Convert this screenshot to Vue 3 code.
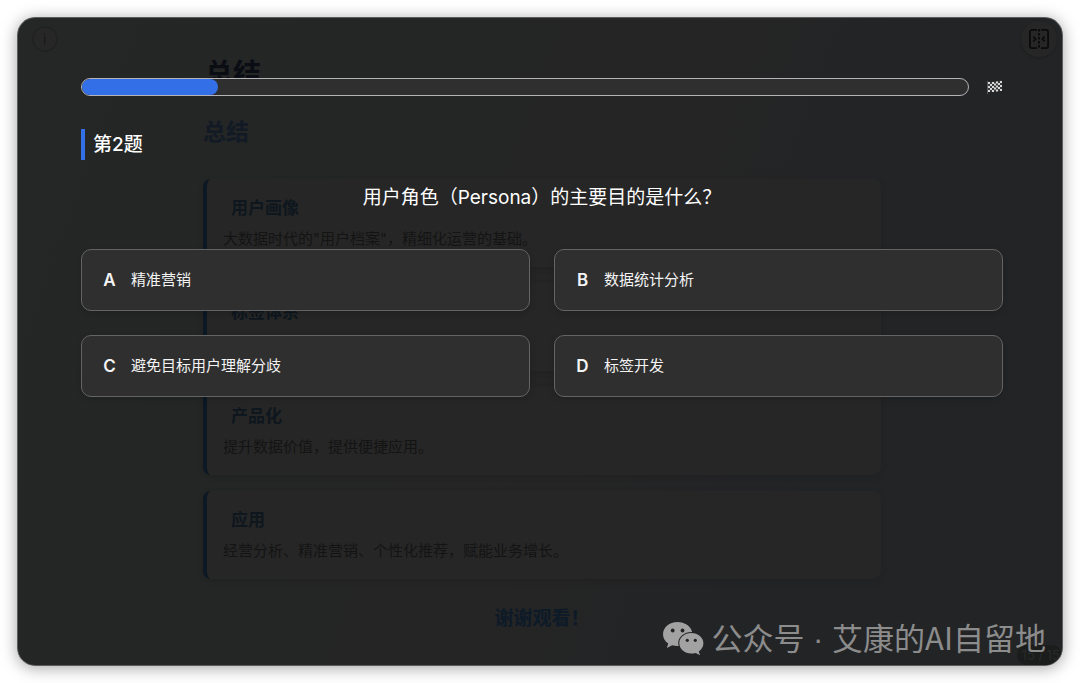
<script setup>
import { ref } from 'vue'

const current = ref(2)
const progress = ref(15.4)
const selected = ref('')

const options = [
  { key: 'A', text: '精准营销' },
  { key: 'B', text: '数据统计分析' },
  { key: 'C', text: '避免目标用户理解分歧' },
  { key: 'D', text: '标签开发' },
]

const cards = [
  { title: '用户画像', text: '大数据时代的"用户档案"，精细化运营的基础。' },
  { title: '标签体系', text: '' },
  { title: '产品化', text: '提升数据价值，提供便捷应用。' },
  { title: '应用', text: '经营分析、精准营销、个性化推荐，赋能业务增长。' },
]

const flagCells = []
for (let row = 0; row < 5; row++) {
  for (let col = 0; col < 7; col++) {
    if ((row + col) % 2 === 0) {
      flagCells.push({ x: 1 + col * 2, y: row * 2 + (col < 3 ? 2 : col < 5 ? 1.5 : 1) })
    }
  }
}
</script>

<template>
  <main class="window">
    <section class="slide" aria-hidden="true">
      <h1>总结</h1>
      <h2>总结</h2>
      <div class="cards">
        <article v-for="card in cards" :key="card.title" class="card">
          <h3>{{ card.title }}</h3>
          <p>{{ card.text }}</p>
        </article>
      </div>
      <p class="thanks">谢谢观看！</p>
    </section>

    <button class="info" type="button" aria-label="信息">
      <svg width="26" height="26" viewBox="0 0 26 26" fill="none">
        <circle cx="13" cy="13" r="12" fill="#272727" stroke="#202121" stroke-width="1.5" />
        <path d="M12.7 7.2v1.6M12.7 10.6v8" stroke="#181818" stroke-width="1.2" />
      </svg>
    </button>

    <button class="split" type="button" aria-label="分屏">
      <svg width="22" height="22" viewBox="0 0 22 22" fill="none" stroke="#0b0b0b" stroke-width="1.8">
        <path d="M9 1.9H4A2.1 2.1 0 0 0 1.9 4v14A2.1 2.1 0 0 0 4 20.1h5" />
        <path d="M13 1.9h5A2.1 2.1 0 0 1 20.1 4v14a2.1 2.1 0 0 1-2.1 2.1h-5" />
        <path d="M11 1v20" stroke-dasharray="2.4 1.6" />
        <path d="M5.4 8.6L7.6 11l-2.2 2.4M16.6 8.6L14.4 11l2.2 2.4" />
      </svg>
    </button>

    <span class="page">15 / 15</span>

    <section class="quiz">
      <div class="progress-row">
        <div class="track" role="progressbar" aria-label="答题进度" :aria-valuenow="progress">
          <div class="fill" :style="{ width: progress + '%' }"></div>
        </div>
        <svg class="flag" width="16" height="14" viewBox="0 0 16 14">
          <path d="M1 2l5-.6L10 1 15 .6v10l-5 .5-4 1-5-.5z" fill="#3c3c3c" />
          <path d="M.5 1v13" stroke="#5a5a5a" stroke-width="1" />
          <rect v-for="(c, i) in flagCells" :key="i" :x="c.x" :y="c.y" width="2" height="2" fill="#d8d8d8" />
        </svg>
      </div>
      <h2 class="number">第{{ current }}题</h2>
      <p class="question">用户角色（Persona）的主要目的是什么？</p>
      <div class="options">
        <button
          v-for="o in options"
          :key="o.key"
          class="option"
          type="button"
          :aria-pressed="selected === o.key"
          @click="selected = o.key"
        >
          <span class="letter">{{ o.key }}</span>
          <span>{{ o.text }}</span>
        </button>
      </div>
    </section>

    <footer class="brand">
      <svg width="42" height="36" viewBox="0 0 42 36">
        <path d="M15.5 1C7.4 1 1 6.4 1 13.2c0 3.8 2 7 5.2 9.3L4.9 27l5.2-2.7c1.7.5 3.5.8 5.4.8h1.2a10 10 0 0 1-.5-3c0-6.3 6-11.200 13.200-11.200h.7C28.800 5.200 22.800 1 15.500 1z" fill="#a2a2a2" />
        <path d="M29.300 12.100c-6.700 0-12 4.500-12 10.200s5.300 10.300 12 10.300c1.500 0 3-.3 4.400-.7l4.300 2.400-1.200-3.900c2.900-2 4.600-4.800 4.600-8.100 0-5.700-5.400-10.200-12.100-10.200z" fill="#a2a2a2" />
        <g fill="#232425">
          <circle cx="10.7" cy="9.5" r="1.9" />
          <circle cx="20.5" cy="9.5" r="1.9" />
          <circle cx="25.3" cy="19.3" r="1.6" />
          <circle cx="33.3" cy="19.3" r="1.6" />
        </g>
      </svg>
      <span>公众号<span class="dot"> · </span>艾康的AI自留地</span>
    </footer>
  </main>
</template>

<style>
body {
  margin: 0;
  background: #fff;
}
</style>

<style scoped>
* {
  box-sizing: border-box;
}

h1,
h2,
h3,
p {
  margin: 0;
}

button {
  font: inherit;
  cursor: pointer;
}

.window {
  position: relative;
  display: grid;
  min-height: calc(100vh - 34px);
  margin: 17px;
  overflow: hidden;
  border: 1px solid #5c5c5c;
  border-radius: 18px;
  background: linear-gradient(110deg, #252626 0%, #242525 30%, #252525 50%, #232426 75%, #232425 100%);
  box-shadow: 0 2px 16px rgba(0, 0, 0, 0.36);
  font-family: Inter, "Noto Sans CJK SC", sans-serif;
  color: #fff;
}

.slide,
.quiz {
  grid-area: 1 / 1;
  min-width: 0;
}

.slide {
  padding: 38px 181px 0 185px;
}

.slide h1 {
  padding-left: 2px;
  font-size: 28px;
  line-height: 36px;
  color: #0a0d13;
}

.slide h2 {
  margin-top: 22px;
  font-size: 23px;
  line-height: 36px;
  font-weight: 700;
  color: #111a25;
}

.cards {
  display: grid;
  gap: 16px;
  margin-top: 29px;
}

.card {
  height: 88px;
  padding: 16px;
  border-left: 4px solid #0c1824;
  border-radius: 8px;
  background: #262626;
  box-shadow: 0 2px 6px rgba(0, 0, 0, 0.1);
}

.card h3 {
  padding-left: 8px;
  font-size: 17px;
  line-height: 26px;
  font-weight: 700;
  color: #0e161e;
}

.card p {
  margin-top: 6px;
  font-size: 15px;
  line-height: 24px;
  color: #141414;
}

.thanks {
  margin-top: 25px;
  text-align: center;
  font-size: 19px;
  line-height: 30px;
  font-weight: 700;
  color: #0d1a28;
}

.info,
.split {
  position: absolute;
  display: grid;
  place-items: center;
  padding: 0;
  border: 0;
  border-radius: 50%;
  color: inherit;
}

.info {
  top: 8px;
  left: 14px;
  width: 26px;
  height: 26px;
  background: transparent;
}

.split {
  top: 3px;
  right: 5px;
  width: 36px;
  height: 36px;
  background: #262626;
  box-shadow: 0 1px 3px rgba(0, 0, 0, 0.2);
}

.page {
  position: absolute;
  right: 0;
  bottom: 0;
  padding: 0 2px 0 5px;
  border-radius: 10px;
  background: #1b1c1c;
  font-size: 13px;
  line-height: 20px;
  color: #2a2a2a;
}

.quiz {
  position: relative;
  padding: 60px 59px 0 63px;
}

.progress-row {
  display: flex;
  align-items: center;
  gap: 18px;
}

.track {
  flex: 1;
  height: 18px;
  overflow: hidden;
  border: 1px solid #b4b4b8;
  border-radius: 9px;
  background: #2f2f2f;
}

.fill {
  height: 100%;
  border-radius: 8px;
  background: #3370e7;
}

.number {
  margin-top: 33px;
  padding-left: 8px;
  border-left: 4px solid #3370e7;
  font-size: 19px;
  line-height: 31px;
  font-weight: 500;
}

.question {
  margin-top: 22px;
  text-align: center;
  font-size: 19px;
  line-height: 32px;
}

.options {
  display: grid;
  grid-template-columns: 1fr 1fr;
  gap: 24px;
  margin-top: 35px;
}

.option {
  display: flex;
  align-items: center;
  gap: 15px;
  height: 62px;
  padding: 0 21px;
  border: 1px solid #646464;
  border-radius: 10px;
  background: #2f2f2f;
  box-shadow: 0 2px 6px rgba(0, 0, 0, 0.16);
  font-size: 15px;
  line-height: 24px;
  text-align: left;
  color: #f4f4f4;
}

.letter {
  width: 13px;
  font-size: 17px;
  font-weight: 600;
  text-align: center;
}

.brand {
  position: absolute;
  right: 16px;
  bottom: 3px;
  display: flex;
  align-items: center;
  gap: 8px;
  font-family: "Noto Sans CJK SC", sans-serif;
  font-size: 31px;
  line-height: 44px;
  font-weight: 400;
  color: #8c8c8c;
  white-space: nowrap;
}

.dot {
  font-family: "Liberation Sans", sans-serif;
}
</style>
